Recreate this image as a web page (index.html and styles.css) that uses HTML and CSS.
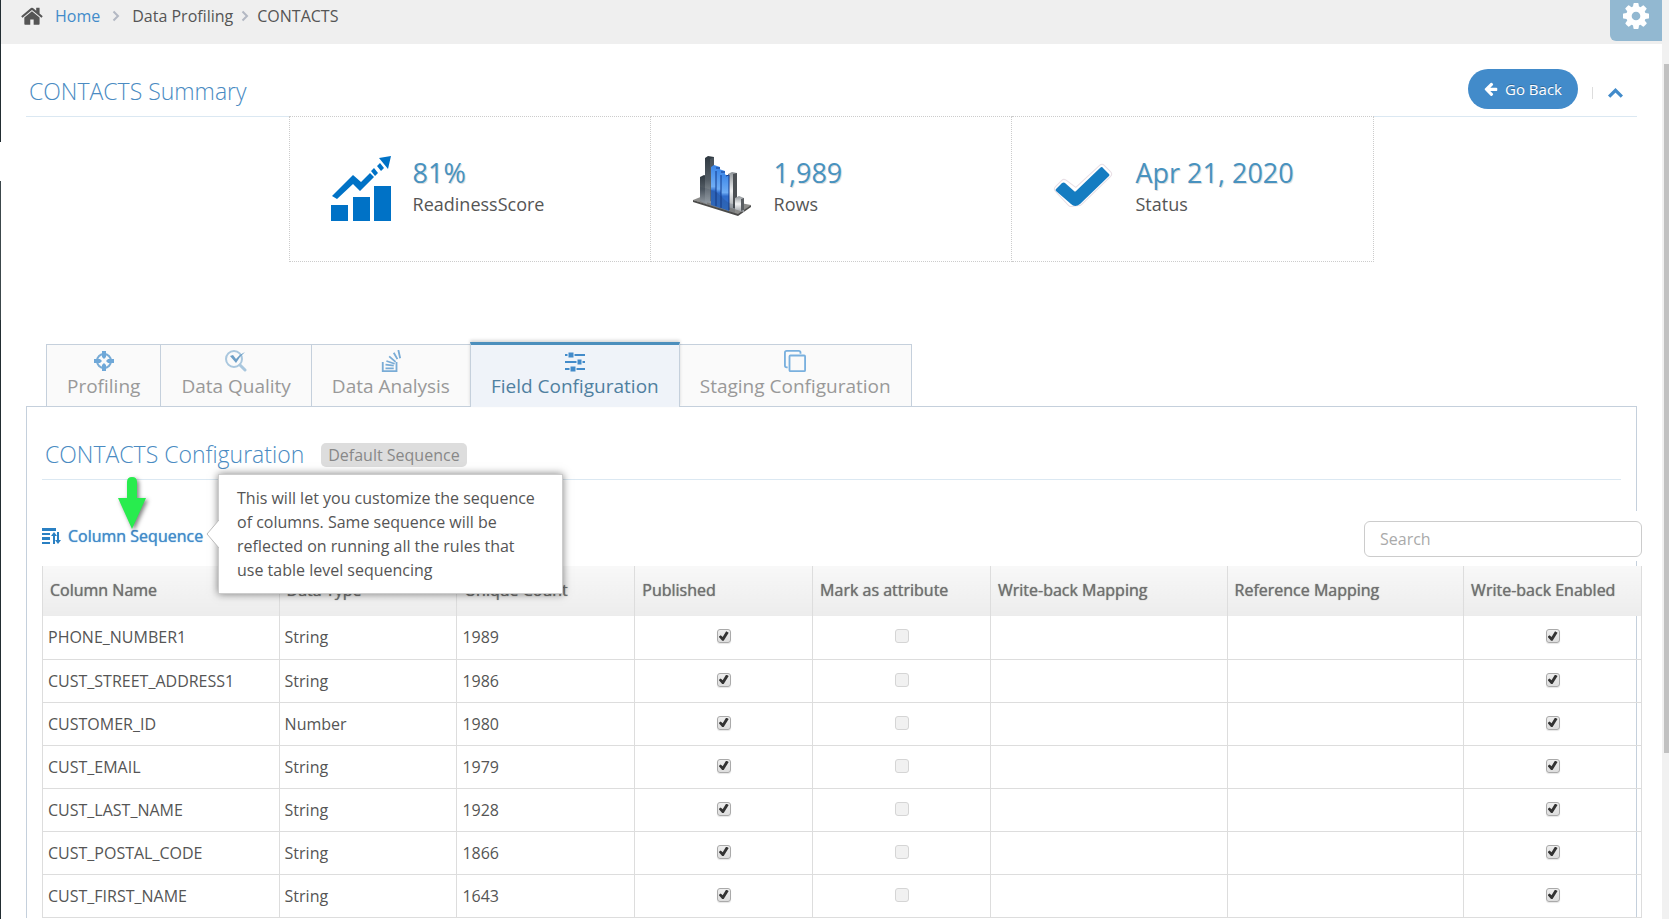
FILE: index.html
```
<!DOCTYPE html>
<html lang="en">

<head>
  <meta charset="UTF-8">
  <meta name="viewport" content="width=device-width, initial-scale=1.0">
  <title>CONTACTS - Data Profiling</title>
  <link rel="stylesheet" href="styles.css">
</head>

<body>
  <div class="edge"></div>
  <div class="page">
    <header class="topbar">
      <nav class="breadcrumb">
        <svg class="home-icon" viewBox="20 200 1630 1360">
          <path d="M1408 992v480q0 26-19 45t-45 19h-384v-384h-256v384h-384q-26 0-45-19t-19-45v-480q0-1 .5-3t.5-3l575-474 575 474q1 2 1 6zm223-69l-62 74q-8 9-21 11h-3q-13 0-21-7l-692-577-692 577q-12 8-24 7-13-2-21-11l-62-74q-8-10-7-23.5t11-21.5l719-599q32-26 76-26t76 26l244 204v-195q0-14 9-23t23-9h192q14 0 23 9t9 23v408l219 182q10 8 11 21.5t-7 23.5z"/>
        </svg>
        <a href="#">Home</a>
        <svg class="sep sep-wide" viewBox="0 0 8 12"><path d="M1.500 1.500L6 6l-4.500 4.500"/></svg>
        <span>Data Profiling</span>
        <svg class="sep" viewBox="0 0 8 12"><path d="M1.500 1.500L6 6l-4.500 4.500"/></svg>
        <span>CONTACTS</span>
      </nav>
      <button class="settings" type="button" aria-label="Settings">
        <svg viewBox="0 -128 1536 1536">
          <path d="M1024 640q0-106-75-181t-181-75-181 75-75 181 75 181 181 75 181-75 75-181zm512-109v222q0 12-8 23t-20 13l-185 28q-19 54-39 91 35 50 107 138 10 12 10 25t-9 23q-27 37-99 108t-94 71q-12 0-26-9l-138-108q-44 23-91 38-16 136-29 186-7 28-36 28h-222q-14 0-24.500-8.500t-11.500-21.500l-28-184q-49-16-90-37l-141 107q-10 9-25 9-14 0-25-11-126-114-165-168-7-10-7-23 0-12 8-23 15-21 51-66.500t54-70.500q-27-50-41-99l-183-27q-13-2-21-12.500t-8-23.500v-222q0-12 8-23t19-13l186-28q14-46 39-92-40-57-107-138-10-12-10-24 0-10 9-23 26-36 98.500-107.500t94.500-71.500q13 0 26 10l138 107q44-23 91-38 16-136 29-186 7-28 36-28h222q14 0 24.500 8.500t11.500 21.500l28 184q49 16 90 37l142-107q9-9 24-9 13 0 25 10 129 119 165 170 7 8 7 22 0 12-8 23-15 21-51 66.500t-54 70.500q26 50 41 98l183 28q13 2 21 12.500t8 23.500z"/>
        </svg>
      </button>
    </header>

    <main class="content">
      <section>
        <div class="title-row">
          <h1>CONTACTS Summary</h1>
          <div class="title-actions">
            <button class="go-back" type="button">
              <svg viewBox="0 100 1600 1640"><path d="M1536 896v128q0 53-32.500 90.500t-84.500 37.500h-704l293 294q38 36 38 90t-38 90l-75 76q-37 37-90 37-52 0-91-37l-651-652q-37-37-37-90 0-52 37-91l651-650q38-38 91-38 52 0 90 38l75 74q38 38 38 91t-38 91l-293 293h704q52 0 84.500 37.500t32.500 90.500z"/></svg>
              Go Back
            </button>
            <span class="divider"></span>
            <button class="collapse" type="button" aria-label="Collapse">
              <svg viewBox="0 0 16 11"><path d="M2 9l6-6 6 6"/></svg>
            </button>
          </div>
        </div>

        <div class="cards">
          <div class="card">
            <svg class="card-icon" viewBox="0 0 60 66" fill="#0072c6">
              <path d="M0 49h17v16H0zM22 41h17v24H22zM43 30h17v35H43z"/>
              <path d="M1 40l21-21 8 7 9-9 4 4-14 14-7-7L6 43z"/>
              <path d="M40 15l3-3 4 5-3 3zM46 10l3-3 4 5-3 3zM48 2L60 0l-3 13z"/>
            </svg>
            <div class="card-text">
              <strong>81%</strong>
              <span>ReadinessScore</span>
            </div>
          </div>
          <div class="card">
            <svg class="card-icon" viewBox="0 0 60 66">
              <defs>
                <linearGradient id="dark" x1="0" y1="0" x2="0" y2="1"><stop offset="0" stop-color="#2f3840"/><stop offset=".5" stop-color="#555e66"/><stop offset="1" stop-color="#a9b0b6"/></linearGradient>
                <linearGradient id="blue" x1="0" y1="0" x2="0" y2="1"><stop offset="0" stop-color="#3b86e8"/><stop offset=".5" stop-color="#6fadf5"/><stop offset=".6" stop-color="#2f6ccb"/><stop offset="1" stop-color="#3272cf"/></linearGradient>
                <linearGradient id="light" x1="0" y1="0" x2="0" y2="1"><stop offset="0" stop-color="#8f9498"/><stop offset=".5" stop-color="#f2f3f4"/><stop offset="1" stop-color="#9a9fa4"/></linearGradient>
              </defs>
              <path d="M1 44l10-4 48 9-13 10z" fill="#8d8d8b"/>
              <path d="M1 44v2l45 14v-2zM46 58v2l13-9v-2z" fill="#4b4b4a"/>
              <path d="M8 21l4-2 3 1v28l-7-3z" fill="url(#dark)"/>
              <path d="M13 2l3-2 6 1v47l-9-2z" fill="url(#dark)"/>
              <path d="M18 3l4-2v45l-4-1z" fill="#59636b" opacity=".6"/>
              <path d="M36 18l4-2 5 1v37l-9-3z" fill="url(#light)"/>
              <path d="M41 18l4-1v36l-4-1z" fill="#4c5054"/>
              <path d="M19 11l3-2 6 2v41l-9-3z" fill="url(#blue)"/>
              <path d="M24 15l3-2 6 2v38l-9-3z" fill="url(#blue)"/>
              <path d="M29 20l3-2 5 2v35l-8-3z" fill="url(#blue)"/>
              <path d="M24 12h4M24 15v35M29 16h4M29 19v33M34 20l3-1v35" fill="none" stroke="#123a8c" stroke-width="1"/>
              <path d="M43 42l4-2 5 2v14l-4-1-5-2z" fill="url(#light)"/>
              <path d="M49 43l3-1v12l-3 1z" fill="#5a5e62"/>
              <path d="M8 31q15 2 22 10t13 7v9L8 46z" fill="#1d2a3a" opacity=".15"/>
            </svg>
            <div class="card-text">
              <strong>1,989</strong>
              <span>Rows</span>
            </div>
          </div>
          <div class="card">
            <svg class="card-icon" viewBox="0 0 60 66">
              <g stroke-linejoin="round">
                <path d="M5 33l6-6 12 9 26-24 6 6-29 28-8 1z" fill="#e9dfe5" stroke="#e9dfe5" stroke-width="8"/>
                <path d="M5 33l6-6 12 9 26-24 6 6-29 28-8 1z" fill="#fff" stroke="#fff" stroke-width="6"/>
                <path d="M3 33l6-6q2-1 3 0l9 8q1 1 2 0l24-23q2-2 3 0l6 6q1 1 0 2L27 48q-5 4-9 0L3 35q-1-1 0-2z" fill="#157cc1"/>
              </g>
            </svg>
            <div class="card-text">
              <strong>Apr 21, 2020</strong>
              <span>Status</span>
            </div>
          </div>
        </div>
      </section>

      <nav class="tabs">
        <a class="tab" href="#">
          <svg viewBox="0 0 22 22" fill="#6fa8d8">
            <circle cx="11" cy="11" r="7" fill="none" stroke="#79acd6" stroke-width="2"/>
            <path d="M9 1h4v6l-2 2-2-2zM9 21h4v-6l-2-2-2 2zM1 9v4h6l2-2-2-2zM21 9v4h-6l-2-2 2-2z"/>
          </svg>
          Profiling
        </a>
        <a class="tab" href="#">
          <svg viewBox="0 0 22 22" fill="none">
            <circle cx="9" cy="9" r="8" stroke="#a9c7de" stroke-width="2"/>
            <path d="M15 15l5 5" stroke="#a9c7de" stroke-width="3" stroke-linecap="round"/>
            <path d="M5 6l3-1 3 4q4-5 9-7-6 5-9 11z" fill="#6d9fc7"/>
          </svg>
          Data Quality
        </a>
        <a class="tab" href="#">
          <svg viewBox="0 0 22 24" fill="none" stroke="#79acd6" stroke-width="2">
            <path d="M2 13v10h15V13"/>
            <path d="M5 20h9M5 16l9 1M6 12l9 3M9 7l7 6M14 3l4 7M19 0l2 9"/>
          </svg>
          Data Analysis
        </a>
        <a class="tab active" href="#">
          <svg viewBox="0 0 22 22" fill="#428bca">
            <path d="M1 4h20v2H1zM1 11h20v2H1zM1 18h20v2H1z"/>
            <path d="M4 2h6v6H4zM13 9h5v6h-5zM6 16h6v6H6z" stroke="#eff3f9" stroke-width="1"/>
          </svg>
          Field Configuration
        </a>
        <a class="tab" href="#">
          <svg viewBox="0 0 24 24" fill="none" stroke="#79b0de" stroke-width="2">
            <path d="M18 4V3q0-2-2-2H3Q1 1 1 3v14q0 2 2 2h1"/>
            <rect x="6" y="6" width="17" height="17" rx="1"/>
          </svg>
          Staging Configuration
        </a>
      </nav>

      <section class="panel">
        <div class="panel-head">
          <h2>CONTACTS Configuration</h2>
          <span class="badge">Default Sequence</span>
        </div>

        <div class="toolbar">
          <div class="sequence">
            <a href="#">
              <svg viewBox="0 0 19 17" fill="#2a80c3">
                <path d="M0 0h14v3H0zM0 5h8v2H0zM0 9h8v3H0zM0 14h8v2H0z"/>
                <path d="M11 16V8H9l3-4 3 4h-2v8zM15 4h2v8h2l-3 4-3-4h2z"/>
              </svg>
              Column Sequence
            </a>
            <svg class="pointer" viewBox="0 0 30 54">
              <path d="M10 6q0-5 5-5t5 5v16h9L15 53 1 22h9z" fill="#28ec4e"/>
            </svg>
            <div class="tooltip">
              <svg class="tooltip-arrow" viewBox="0 0 13 28"><path d="M13 0L1 14l12 14" fill="#fff" stroke="#bbb"/></svg>
              This will let you customize the sequence of columns. Same sequence will be reflected on running all the rules that use table level sequencing
            </div>
          </div>
          <input class="search" type="text" placeholder="Search" aria-label="Search">
        </div>

        <table class="grid">
          <colgroup>
            <col class="wide"><col><col><col><col><col class="wide"><col class="wide"><col>
          </colgroup>
          <thead>
            <tr>
              <th>Column Name</th>
              <th>Data Type</th>
              <th>Unique Count</th>
              <th>Published</th>
              <th>Mark as attribute</th>
              <th>Write-back Mapping</th>
              <th>Reference Mapping</th>
              <th>Write-back Enabled</th>
            </tr>
          </thead>
          <tbody>
            <tr>
              <td>PHONE_NUMBER1</td>
              <td>String</td>
              <td>1989</td>
              <td class="check"><input type="checkbox" aria-label="Published" checked></td>
              <td class="check"><input type="checkbox" aria-label="Mark as attribute" disabled></td>
              <td></td>
              <td></td>
              <td class="check"><input type="checkbox" aria-label="Write-back Enabled" checked></td>
            </tr>
            <tr>
              <td>CUST_STREET_ADDRESS1</td>
              <td>String</td>
              <td>1986</td>
              <td class="check"><input type="checkbox" aria-label="Published" checked></td>
              <td class="check"><input type="checkbox" aria-label="Mark as attribute" disabled></td>
              <td></td>
              <td></td>
              <td class="check"><input type="checkbox" aria-label="Write-back Enabled" checked></td>
            </tr>
            <tr>
              <td>CUSTOMER_ID</td>
              <td>Number</td>
              <td>1980</td>
              <td class="check"><input type="checkbox" aria-label="Published" checked></td>
              <td class="check"><input type="checkbox" aria-label="Mark as attribute" disabled></td>
              <td></td>
              <td></td>
              <td class="check"><input type="checkbox" aria-label="Write-back Enabled" checked></td>
            </tr>
            <tr>
              <td>CUST_EMAIL</td>
              <td>String</td>
              <td>1979</td>
              <td class="check"><input type="checkbox" aria-label="Published" checked></td>
              <td class="check"><input type="checkbox" aria-label="Mark as attribute" disabled></td>
              <td></td>
              <td></td>
              <td class="check"><input type="checkbox" aria-label="Write-back Enabled" checked></td>
            </tr>
            <tr>
              <td>CUST_LAST_NAME</td>
              <td>String</td>
              <td>1928</td>
              <td class="check"><input type="checkbox" aria-label="Published" checked></td>
              <td class="check"><input type="checkbox" aria-label="Mark as attribute" disabled></td>
              <td></td>
              <td></td>
              <td class="check"><input type="checkbox" aria-label="Write-back Enabled" checked></td>
            </tr>
            <tr>
              <td>CUST_POSTAL_CODE</td>
              <td>String</td>
              <td>1866</td>
              <td class="check"><input type="checkbox" aria-label="Published" checked></td>
              <td class="check"><input type="checkbox" aria-label="Mark as attribute" disabled></td>
              <td></td>
              <td></td>
              <td class="check"><input type="checkbox" aria-label="Write-back Enabled" checked></td>
            </tr>
            <tr>
              <td>CUST_FIRST_NAME</td>
              <td>String</td>
              <td>1643</td>
              <td class="check"><input type="checkbox" aria-label="Published" checked></td>
              <td class="check"><input type="checkbox" aria-label="Mark as attribute" disabled></td>
              <td></td>
              <td></td>
              <td class="check"><input type="checkbox" aria-label="Write-back Enabled" checked></td>
            </tr>
          </tbody>
        </table>
      </section>
    </main>
  </div>
  <div class="scrollbar">
    <div class="thumb"></div>
  </div>
</body>

</html>
```
FILE: styles.css
```
* {
  box-sizing: border-box;
}

body {
  margin: 0;
  height: 100vh;
  overflow: hidden;
  display: flex;
  background: #fff;
  color: #555;
  font-family: "Open Sans", sans-serif;
  font-size: 16px;
  line-height: 24px;
}

a {
  color: #428bca;
  text-decoration: none;
}

button {
  font: inherit;
  border: 0;
  padding: 0;
  cursor: pointer;
}

/* collapsed side menu */
.edge {
  width: 1px;
  background: linear-gradient(#222d32 142px, #fff 142px, #fff 181px, #3c474b 181px, #3c474b 320px, #222d32 320px);
}

.page {
  flex: 1;
  min-width: 0;
}

/* top bar */
.topbar {
  display: flex;
  justify-content: space-between;
  align-items: flex-start;
  height: 44px;
  background: #efefef;
}

.breadcrumb {
  display: flex;
  align-items: center;
  padding: 4px 0 0 20px;
}

.home-icon {
  width: 22px;
  height: 18px;
  margin-right: 12px;
  fill: #555;
}

.sep {
  width: 8px;
  height: 12px;
  margin: 0 8px;
  fill: none;
  stroke: #b3b8c3;
  stroke-width: 2;
}

.sep-wide {
  margin: 0 12px;
}

.settings {
  width: 52px;
  height: 41px;
  padding-bottom: 10px;
  background: #92b8d1;
  border-bottom-left-radius: 6px;
}

.settings svg {
  display: block;
  width: 26px;
  height: 26px;
  margin: 0 auto;
  fill: #fff;
}

.content {
  padding: 0 25px;
}

/* summary */
.title-row {
  display: flex;
  justify-content: space-between;
  align-items: center;
  height: 73px;
  padding: 22px 13px 4px 3px;
  border-bottom: 1px solid #dbe8f2;
}

h1,
h2 {
  margin: 0;
  color: #4a8bc2;
  font-size: 23px;
  font-weight: 300;
  line-height: 32px;
}

h1 {
  padding-top: 3px;
}

.title-actions {
  display: flex;
  align-items: center;
}

.go-back {
  display: flex;
  align-items: center;
  justify-content: center;
  gap: 7px;
  width: 110px;
  height: 40px;
  border-radius: 20px;
  background: #428bca;
  color: #fff;
  font-size: 15px;
  text-shadow: 0 -1px 0 rgba(0, 0, 0, .25);
}

.go-back svg {
  width: 14px;
  height: 14px;
  fill: #fff;
}

.divider {
  width: 1px;
  height: 12px;
  margin: 8px 14px 0;
  background: #ddd;
}

.collapse {
  background: none;
  margin-top: 8px;
}

.collapse svg {
  display: block;
  width: 17px;
  height: 12px;
  fill: none;
  stroke: #428bca;
  stroke-width: 3;
}

.cards {
  display: grid;
  grid-template-columns: repeat(3, 1fr);
  width: 67.400%;
  margin: -1px auto 80px;
}

.card {
  display: flex;
  align-items: center;
  gap: 22px;
  height: 146px;
  padding: 0 0 0 41px;
  background: #fff;
  border: 1px dotted #ccc;
}

.card + .card {
  border-left: 0;
}

.card-icon {
  width: 60px;
  height: 66px;
}

.card-text {
  padding-bottom: 2px;
}

.card-text strong {
  display: block;
  color: #4892bf;
  font-size: 27px;
  font-weight: 400;
  line-height: 32px;
  text-shadow: 1px 1px 0 #ddd;
}

.card-text span {
  display: block;
  font-size: 18px;
  line-height: 30px;
}

/* tabs */
.tabs {
  display: flex;
  align-items: flex-end;
  padding-left: 21px;
}

.tab {
  display: flex;
  flex-direction: column;
  align-items: center;
  margin-left: -1px;
  padding: 5px 20px 6px;
  background: #fafafa;
  border: 1px solid #c5d0dc;
  border-bottom: 0;
  color: #999;
  font-size: 19px;
  line-height: 28px;
}

.tab svg {
  width: 22px;
  height: 22px;
}

.tab.active {
  position: relative;
  padding-bottom: 7px;
  margin-bottom: -1px;
  background: #eff3f9;
  border-top: 3px solid #4c8fbd;
  color: #4f80a0;
  box-shadow: 0 -2px 3px 0 rgba(0, 0, 0, .15);
}

/* configuration */
.panel {
  min-height: 512px;
  border: 1px solid #c5d0dc;
  border-bottom: 0;
  padding: 31px 0 0 15px;
}

.panel-head {
  display: flex;
  align-items: center;
  gap: 17px;
  height: 42px;
  margin-right: 15px;
  padding: 0 0 10px 3px;
  border-bottom: 1px solid #dbe8f2;
}

.badge {
  padding: 0 7px;
  background: #ddd;
  border-radius: 5px;
  color: #888;
  margin-top: 3px;
}

.toolbar {
  display: flex;
  justify-content: space-between;
  align-items: center;
  position: relative;
  height: 50px;
  margin: 31px -6px 5px 0;
  background: #fff;
}

.sequence {
  position: relative;
}

.sequence a {
  display: flex;
  align-items: center;
  gap: 7px;
  text-shadow: 0 0 1px #428bca;
}

.sequence a svg {
  width: 19px;
  height: 17px;
}

.pointer {
  position: absolute;
  left: 75px;
  top: -48px;
  width: 30px;
  height: 54px;
  filter: drop-shadow(2px 2px 2px rgba(0, 0, 0, .5));
}

.tooltip {
  position: absolute;
  left: 176px;
  top: -50px;
  z-index: 2;
  width: 345px;
  padding: 11px 18px;
  background: #fff;
  border: 1px solid #ccc;
  box-shadow: 0 0 8px rgba(0, 0, 0, .5);
  color: #555;
}

.tooltip-arrow {
  position: absolute;
  left: -13px;
  top: 45px;
  width: 13px;
  height: 28px;
}

.search {
  width: 278px;
  height: 36px;
  margin-top: 6px;
  padding: 0 15px;
  border: 1px solid #ccc;
  border-radius: 6px;
  color: #555;
  font: inherit;
}

.search::placeholder {
  color: #aaa;
}

.grid {
  width: calc(100% + 6px);
  table-layout: fixed;
  border-collapse: collapse;
}

.grid col {
  width: 11.125%;
}

.grid col.wide {
  width: 14.800%;
}

.grid th {
  height: 50px;
  padding: 0 7px 2px;
  background: linear-gradient(#f8f8f8, #ececec);
  border: 1px solid #ddd;
  border-width: 0 1px;
  color: #707070;
  font-weight: 400;
  text-align: left;
  text-shadow: 0 0 1px #707070;
  white-space: nowrap;
}

.grid td {
  height: 43px;
  padding: 0 5px;
  border: 1px solid #ddd;
  border-top: 0;
}

.check input {
  appearance: none;
  display: block;
  width: 14px;
  height: 14px;
  margin: 0 auto 2px;
  border: 1px solid #aaa;
  border-radius: 3px;
  background: linear-gradient(#eee, #ddd);
  box-shadow: 0 1px 1px rgba(0, 0, 0, .1);
}

.check input:checked::before {
  content: "";
  display: block;
  width: 10px;
  height: 10px;
  margin: 1px;
  background: #333;
  clip-path: polygon(0 55%, 20% 40%, 40% 58%, 75% 0, 100% 15%, 50% 95%, 35% 95%);
}

.check input:disabled {
  border-color: #d5d5d5;
  background: #f1f1f1;
  box-shadow: none;
}

/* window scrollbar */
.scrollbar {
  width: 7px;
  padding: 64px 0 0 2px;
  background: #f1f1f1;
}

.thumb {
  height: 75vh;
  background: #c1c1c1;
}
```
